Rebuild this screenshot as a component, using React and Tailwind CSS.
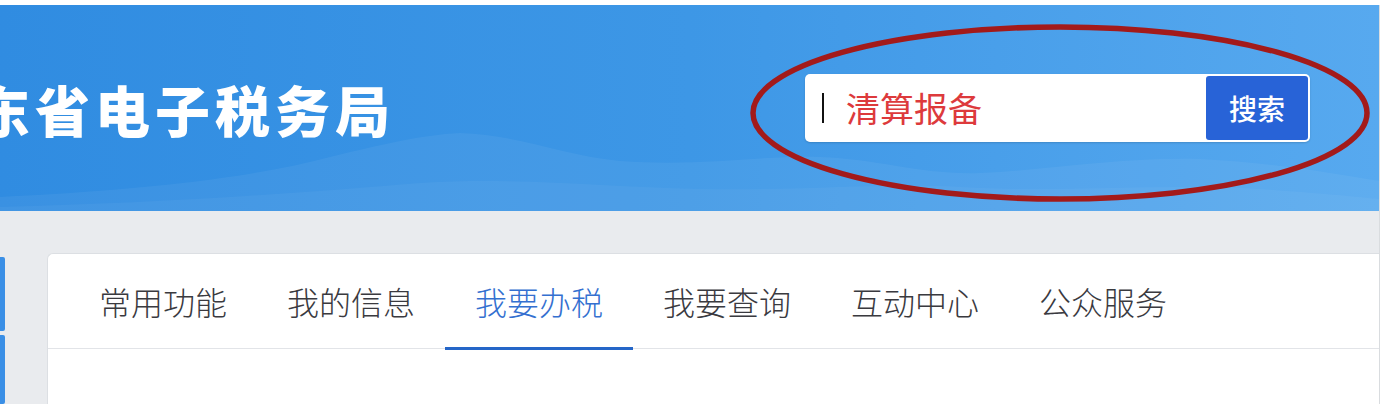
import React from "react";

const tabs = ["常用功能", "我的信息", "我要办税", "我要查询", "互动中心", "公众服务"];

export default function App() {
  return (
    <div
      className="w-[1384px] h-[404px] overflow-hidden bg-white pt-[5px] pr-[4px]"
      style={{ fontFamily: '"Noto Sans CJK SC", "Noto Sans", sans-serif' }}
    >
      <div className="h-full flex flex-col border-r border-[#d9dcdf]">
        <header className="relative h-[206px] shrink-0 overflow-hidden bg-gradient-to-r from-[#308ce1] via-[#3d97e6] to-[#57a9ef]">
          <svg
            className="absolute inset-0"
            width="1380"
            height="206"
            viewBox="0 0 1380 206"
            preserveAspectRatio="none"
          >
            <path
              d="M0 192 C120 186 240 176 330 152 C380 140 420 130 460 128 C520 130 560 150 620 156 C700 162 760 150 820 152 C880 154 920 170 980 168 C1060 164 1120 152 1200 154 C1280 158 1340 170 1380 176 L1380 206 L0 206 Z"
              fill="#ffffff"
              fillOpacity="0.05"
            />
            <path
              d="M0 202 C160 198 300 188 420 178 C520 172 600 182 700 184 C800 186 880 178 960 182 C1060 188 1160 178 1260 184 C1320 188 1360 192 1380 194 L1380 206 L0 206 Z"
              fill="#ffffff"
              fillOpacity="0.04"
            />
          </svg>

          <div className="relative h-full flex items-center">
            <h1 className="ml-[-25px] text-[55px] leading-none font-black tracking-[5px] text-white whitespace-nowrap">
              东省电子税务局
            </h1>

            <div className="ml-auto mr-[69px] flex h-[68px] w-[505px] rounded-[5px] bg-white p-[2px] shadow-[0_1px_2px_rgba(0,0,0,0.15)]">
              <div className="flex flex-1 items-center pl-[15px]">
                <span className="h-[30px] w-[2px] bg-[#111111]" />
                <span className="ml-[22px] text-[34px] leading-none text-[#dd3a3c]">清算报备</span>
              </div>
              <button className="w-[102px] rounded-[3px] bg-[#2863d7] text-[28px] font-medium text-white">
                搜索
              </button>
            </div>
          </div>

          <svg className="absolute inset-0 pointer-events-none" width="1380" height="206">
            <ellipse
              cx="1060"
              cy="108"
              rx="307"
              ry="86"
              fill="none"
              stroke="#a31a1a"
              strokeWidth="5.5"
            />
          </svg>
        </header>

        <main className="flex flex-1 bg-[#e9ebee] pt-[42px]">
          <div className="mt-[4px] flex w-[5px] flex-col gap-[4px]">
            <div className="h-[74px] rounded-r-[2px] bg-[#3a8fe6]" />
            <div className="flex-1 rounded-r-[2px] bg-[#3a8fe6]" />
          </div>
          <section className="ml-[42px] flex-1 rounded-tl-[6px] border-l border-t border-[#dcdfe3] bg-white">
            <nav className="flex h-[95px] border-b border-[#e2e4e8] pl-[21px]">
              {tabs.map((t, i) => (
                <div
                  key={t}
                  className={
                    i === 2
                      ? "relative flex w-[188px] items-center justify-center text-[32px] font-light text-[#3470d0]"
                      : "relative flex w-[188px] items-center justify-center text-[32px] font-light text-[#3a3a3f]"
                  }
                >
                  {t}
                  {i === 2 && (
                    <span className="absolute bottom-[-2px] left-0 right-0 h-[3px] bg-[#2566c8]" />
                  )}
                </div>
              ))}
            </nav>
          </section>
        </main>
      </div>
    </div>
  );
}
